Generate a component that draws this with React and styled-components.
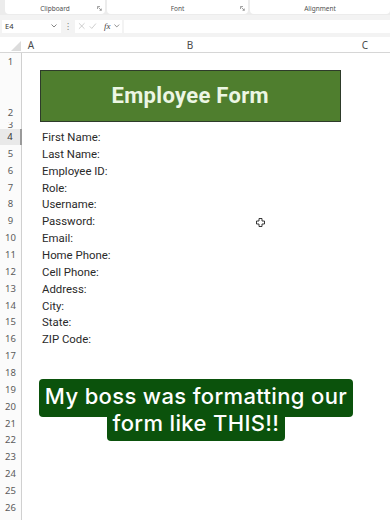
import React from "react";
import styled, { createGlobalStyle } from "styled-components";

const Global = createGlobalStyle`
  html, body { margin: 0; padding: 0; background: #ffffff; }
  body { font-family: "Noto Sans", "Liberation Sans", sans-serif; }
  * { box-sizing: border-box; }
`;

const Page = styled.div`
  width: 390px;
  height: 520px;
  overflow: hidden;
  position: relative;
  display: flex;
  flex-direction: column;
  background: #ffffff;
  & > * { flex-shrink: 0; }
`;

/* ---------- ribbon ---------- */
const Ribbon = styled.div`
  height: 15px;
  background: #ececec;
  display: flex;
  gap: 2px;
  padding: 0 0 0 5px;
`;

const RibbonGroup = styled.div`
  width: ${(p) => p.$w}px;
  flex: ${(p) => (p.$grow ? 1 : "none")};
  height: 14px;
  background: #ffffff;
  border-radius: 0 0 4px 4px;
  display: flex;
  align-items: flex-end;
  justify-content: center;
  position: relative;
  padding-bottom: 1px;
  font-size: 6.5px;
  color: #505050;
  line-height: 9px;
`;

const Launcher = styled.svg`
  position: absolute;
  right: ${(p) => p.$r}px;
  bottom: 3px;
`;

/* ---------- formula bar ---------- */
const FormulaBar = styled.div`
  height: 22px;
  background: #f3f3f3;
  display: flex;
  align-items: center;
  padding: 0 0 0 2px;
`;

const NameBox = styled.div`
  width: 59px;
  height: 13px;
  background: #ffffff;
  display: flex;
  align-items: center;
  justify-content: space-between;
  padding: 0 4px 0 3px;
  font-size: 7.5px;
  color: #333;
`;

const Dots = styled.div`
  width: 14px;
  display: flex;
  justify-content: center;
  font-size: 8px;
  color: #666;
`;

const FxBox = styled.div`
  width: 47px;
  height: 13px;
  background: #ffffff;
  display: flex;
  align-items: center;
  gap: 4px;
  padding: 0 2px 0 3px;
`;

const Fx = styled.span`
  font-family: "Liberation Serif", serif;
  font-style: italic;
  font-size: 9px;
  color: #444;
  margin-left: 3px;
`;

const FormulaInput = styled.div`
  flex: 1;
  height: 13px;
  background: #ffffff;
  margin-left: 2px;
`;

/* ---------- column header ---------- */
const HeaderRow = styled.div`
  height: 16px;
  display: flex;
  border-bottom: 1px solid #d6d6d6;
  background: #ffffff;
`;

const Corner = styled.div`
  width: 22px;
  display: flex;
  align-items: flex-end;
  justify-content: flex-end;
  padding: 0 1px 1px 0;
`;

const ColHead = styled.div`
  width: ${(p) => (p.$w ? `${p.$w}px` : "auto")};
  flex: ${(p) => (p.$w ? "none" : 1)};
  display: flex;
  align-items: center;
  justify-content: center;
  font-size: 10px;
  color: #4a4a4a;
  padding-top: 1px;
`;

/* ---------- grid ---------- */
const Grid = styled.div`
  display: flex;
  flex-direction: column;
`;

const Row = styled.div`
  height: ${(p) => p.$h}px;
  display: flex;
  flex: none;
`;

const RowHead = styled.div`
  width: 22px;
  flex: none;
  background: ${(p) => (p.$sel ? "#e9e9e9" : "#fbfbfb")};
  border-right: ${(p) => (p.$sel ? "2px solid #9a9a9a" : "1px solid #d0d0d0")};
  display: flex;
  align-items: ${(p) => (p.$bottom ? "flex-end" : "center")};
  justify-content: center;
  padding-bottom: ${(p) => (p.$bottom ? 4 : 0)}px;
  overflow: hidden;
  font-size: 9.5px;
  line-height: 10px;
  color: ${(p) => (p.$sel ? "#333" : "#5a5a5a")};
`;

const Cell = styled.div`
  width: ${(p) => (p.$w ? `${p.$w}px` : "auto")};
  flex: ${(p) => (p.$w ? "none" : 1)};
  display: flex;
  align-items: center;
  padding-left: 2px;
  font-family: Roboto, "Noto Sans", sans-serif;
  font-size: 11.4px;
  color: #2a2a2a;
  white-space: nowrap;
`;

const Banner = styled.div`
  width: 300.5px;
  flex: none;
  background: #4f7e2e;
  border: 1.2px solid #2e3b2a;
  display: flex;
  align-items: center;
  justify-content: center;
  font-family: Roboto, "Noto Sans", sans-serif;
  font-weight: 700;
  font-size: 22px;
  letter-spacing: 0.3px;
  color: #ecf6e4;
  padding-bottom: 1px;
`;

/* ---------- caption overlay ---------- */
const Caption = styled.div`
  position: absolute;
  left: 0;
  right: 0;
  top: 379px;
  display: flex;
  flex-direction: column;
  align-items: center;
  padding-left: 2px;
  font-family: Inter, "Noto Sans", sans-serif;
  font-weight: 500;
  font-size: 22px;
  letter-spacing: 0.35px;
  line-height: 27px;
  color: #ffffff;
`;

const CaptionLine = styled.div`
  background: #0b520c;
  border-radius: 4px;
  padding: ${(p) => (p.$first ? "4px 6px 7px" : "0 6px 4px")};
  margin-top: ${(p) => (p.$first ? 0 : -7)}px;
  white-space: nowrap;
`;

const Cursor = styled.svg`
  position: absolute;
  left: 256px;
  top: 218px;
`;

const labels = [
  "First Name:",
  "Last Name:",
  "Employee ID:",
  "Role:",
  "Username:",
  "Password:",
  "Email:",
  "Home Phone:",
  "Cell Phone:",
  "Address:",
  "City:",
  "State:",
  "ZIP Code:",
];

const Chevron = () => (
  <svg width="6" height="4" viewBox="0 0 6 4">
    <path d="M0.5 0.5 L3 3 L5.5 0.5" fill="none" stroke="#666" strokeWidth="0.8" />
  </svg>
);

const LauncherIcon = () => (
  <Launcher $r={3} width="5" height="5" viewBox="0 0 5 5">
    <path d="M0.5 0.5 H3 M0.5 0.5 V3 M1.5 1.5 L4.3 4.3 M2.5 4.3 H4.3 V2.5" fill="none" stroke="#666" strokeWidth="0.6" />
  </Launcher>
);

export default function App() {
  const rows = [];
  for (let n = 4; n <= 27; n++) {
    const label = labels[n - 4];
    rows.push(
      <Row key={n} $h={16.86}>
        <RowHead $sel={n === 4}>{n}</RowHead>
        <Cell $w={18} />
        <Cell $w={300}>{label || ""}</Cell>
        <Cell />
      </Row>
    );
  }

  return (
    <Page>
      <Global />
      <Ribbon>
        <RibbonGroup $w={100}>
          Clipboard
          <LauncherIcon />
        </RibbonGroup>
        <RibbonGroup $w={141}>
          Font
          <LauncherIcon />
        </RibbonGroup>
        <RibbonGroup $grow>Alignment</RibbonGroup>
      </Ribbon>

      <FormulaBar>
        <NameBox>
          E4
          <Chevron />
        </NameBox>
        <Dots>⁝</Dots>
        <FxBox>
          <svg width="8" height="8" viewBox="0 0 8 8">
            <path d="M1 1 L7 7 M7 1 L1 7" stroke="#bdbdbd" strokeWidth="0.8" />
          </svg>
          <svg width="8" height="8" viewBox="0 0 8 8">
            <path d="M0.8 4.4 L3 6.6 L7.4 1.4" fill="none" stroke="#bdbdbd" strokeWidth="0.8" />
          </svg>
          <Fx>fx</Fx>
          <Chevron />
        </FxBox>
        <FormulaInput />
      </FormulaBar>

      <HeaderRow>
        <Corner>
          <svg width="10" height="10" viewBox="0 0 10 10">
            <path d="M10 0 L10 10 L0 10 Z" fill="#dcdcdc" />
          </svg>
        </Corner>
        <ColHead $w={18}>A</ColHead>
        <ColHead $w={300}>B</ColHead>
        <ColHead>C</ColHead>
      </HeaderRow>

      <Grid>
        <Row $h={17}>
          <RowHead>1</RowHead>
          <Cell $w={18} />
          <Cell $w={300} />
          <Cell />
        </Row>
        <Row $h={52}>
          <RowHead $bottom>2</RowHead>
          <Cell $w={18} />
          <Banner>Employee Form</Banner>
          <Cell />
        </Row>
        <Row $h={6.5}>
          <RowHead>3</RowHead>
          <Cell $w={18} />
          <Cell $w={300} />
          <Cell />
        </Row>
        {rows}
      </Grid>

      <Cursor width="9" height="9" viewBox="0 0 9 9">
        <path
          d="M3 0.5 H6 V3 H8.5 V6 H6 V8.5 H3 V6 H0.5 V3 H3 Z"
          fill="#ffffff"
          stroke="#222"
          strokeWidth="0.9"
        />
      </Cursor>

      <Caption>
        <CaptionLine $first>My boss was formatting our</CaptionLine>
        <CaptionLine>form like THIS!!</CaptionLine>
      </Caption>
    </Page>
  );
}
